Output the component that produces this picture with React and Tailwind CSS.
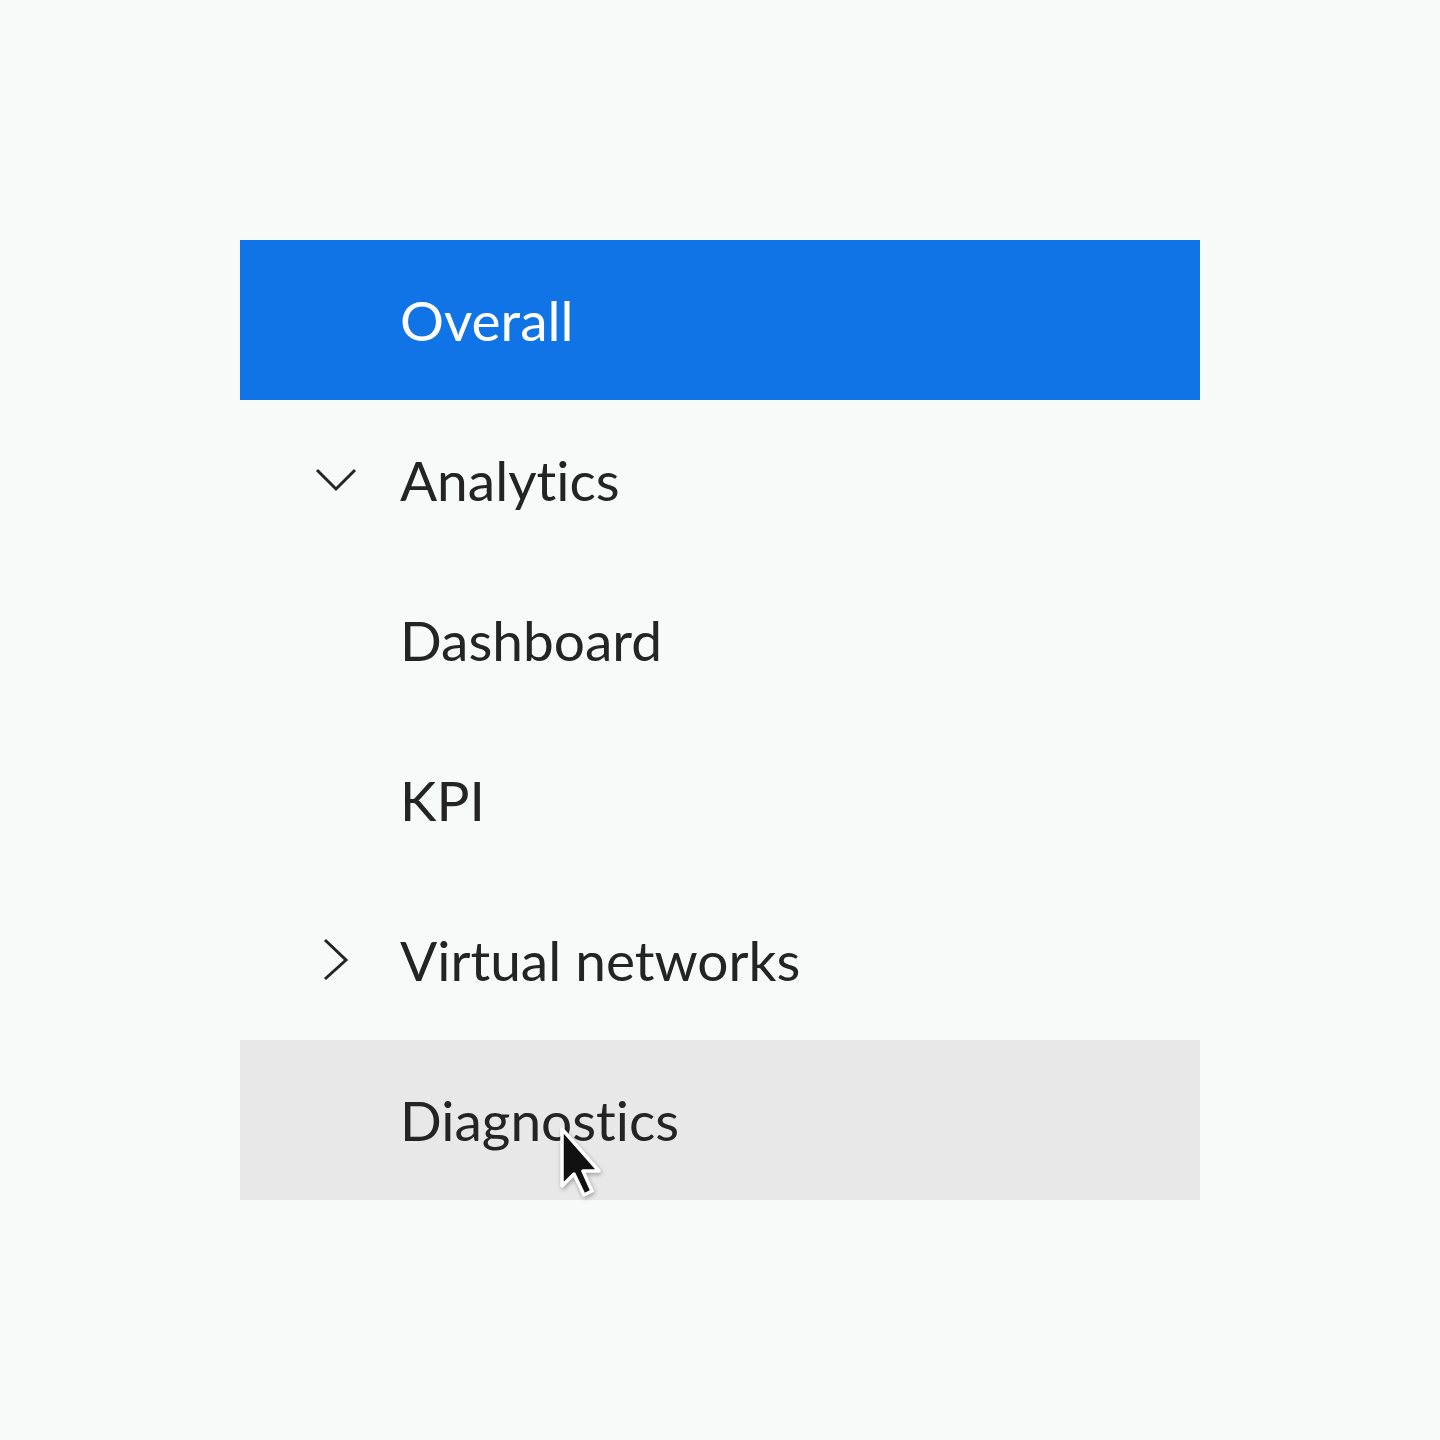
import React from "react";

function ChevronDown() {
  return (
    <svg width="48" height="48" viewBox="0 0 48 48" fill="none">
      <path d="M5 14 L24 33 L43 14" stroke="#242424" strokeWidth="3" strokeLinecap="butt" strokeLinejoin="miter" />
    </svg>
  );
}

function ChevronRight() {
  return (
    <svg width="48" height="48" viewBox="0 0 48 48" fill="none">
      <path d="M13 4 L34 24 L13 43" stroke="#242424" strokeWidth="3" strokeLinecap="butt" strokeLinejoin="miter" />
    </svg>
  );
}

function Cursor() {
  return (
    <svg
      width="50"
      height="80"
      viewBox="0 0 50 80"
      className="absolute left-[318px] top-[85px]"
      style={{ filter: "drop-shadow(1px 2px 2px rgba(0,0,0,0.3))" }}
    >
      <path
        d="M4 4 L4 61 L16 49 L26 70 L34 66 L25 46 L41 46 Z"
        fill="#111"
        stroke="#fff"
        strokeWidth="3.5"
        strokeLinejoin="round"
      />
    </svg>
  );
}

function Row({ label, icon, selected, hover, children }) {
  return (
    <div
      className={
        "relative flex h-[160px] items-center pl-[72px] " +
        (selected ? "bg-[#1174e6] text-white" : hover ? "bg-[#e8e8e8] text-[#242424]" : "text-[#242424]")
      }
    >
      <div className="flex h-[48px] w-[48px] items-center justify-center">{icon}</div>
      <span className="ml-[40px] text-[55px] leading-none [font-variant-ligatures:none]">{label}</span>
      {children}
    </div>
  );
}

export default function App() {
  return (
    <div
      className="min-h-[1440px] w-full bg-[#f8f9f9] pt-[240px]"
      style={{ fontFamily: "Lato, 'Noto Sans', sans-serif" }}
    >
      <div className="ml-[240px] w-[960px]">
        <Row label="Overall" selected />
        <Row label="Analytics" icon={<ChevronDown />} />
        <Row label="Dashboard" />
        <Row label="KPI" />
        <Row label="Virtual networks" icon={<ChevronRight />} />
        <Row label="Diagnostics" hover>
          <Cursor />
        </Row>
      </div>
    </div>
  );
}
